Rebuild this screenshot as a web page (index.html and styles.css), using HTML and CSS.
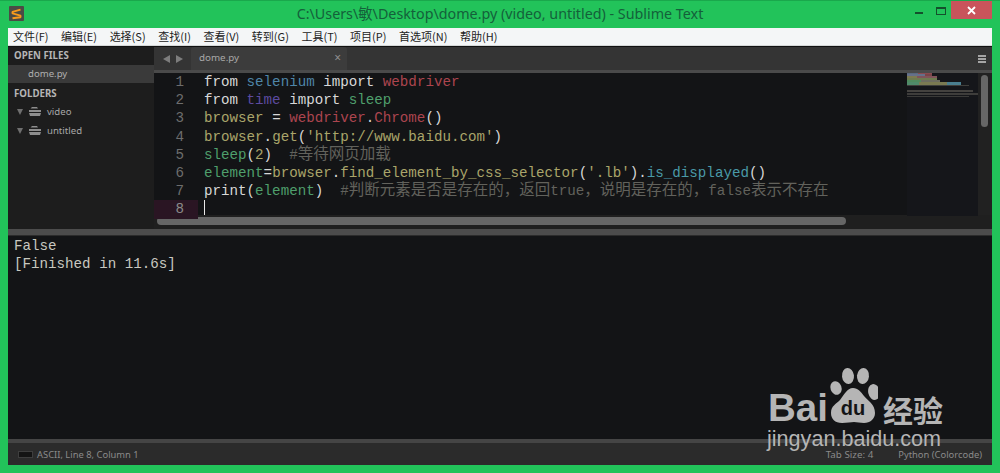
FILE: index.html
```html
<!DOCTYPE html>
<html lang="zh">
<head>
<meta charset="utf-8">
<title>dome.py - Sublime Text</title>
<link rel="stylesheet" href="styles.css">
</head>
<body>
<div class="window">
  <header class="titlebar">
    <svg class="app-icon" width="15" height="15" viewBox="0 0 15 15"><rect width="15" height="15" rx="1" fill="#4b4b45"/><path d="M11.5 3.6 3.5 5.8v1.6l8 2.2v1.6l-8 1" fill="none" stroke="#f99b1c" stroke-width="1.9" stroke-linejoin="bevel"/></svg>
    <div class="title">C:\Users\敏\Desktop\dome.py (video, untitled) - Sublime Text</div>
    <div class="controls">
      <svg class="ctl-min" width="8" height="3" viewBox="0 0 8 3"><rect width="8" height="2" y="1" fill="#14502c"/></svg>
      <svg class="ctl-max" width="10" height="8" viewBox="0 0 10 8"><rect x=".5" y=".5" width="9" height="7" fill="none" stroke="#14502c"/><rect width="10" height="2" fill="#14502c"/></svg>
      <div class="ctl-close"><svg width="9" height="9" viewBox="0 0 9 9"><path d="M1 1l7 7M8 1 1 8" stroke="#fff" stroke-width="1.8"/></svg></div>
    </div>
  </header>
  <nav class="menubar">
    <span>文件(F)</span><span>编辑(E)</span><span>选择(S)</span><span>查找(I)</span><span>查看(V)</span><span>转到(G)</span><span>工具(T)</span><span>项目(P)</span><span>首选项(N)</span><span>帮助(H)</span>
  </nav>
  <div class="app">
    <div class="top">
      <aside class="sidebar">
        <div class="side-head first">OPEN FILES</div>
        <div class="open-file">dome.py</div>
        <div class="side-head second">FOLDERS</div>
        <div class="folder"><i class="arrow"></i><svg width="12" height="9" viewBox="0 0 12 9"><path d="M3 0h5l1 1.5H1.5zM0 3h12v2H0zM0 6h12l-1 3H1z" fill="#8e8e8e"/></svg><span>video</span></div>
        <div class="folder"><i class="arrow"></i><svg width="12" height="9" viewBox="0 0 12 9"><path d="M3 0h5l1 1.5H1.5zM0 3h12v2H0zM0 6h12l-1 3H1z" fill="#8e8e8e"/></svg><span>untitled</span></div>
      </aside>
      <main class="editor-area">
        <div class="tabbar">
          <div class="tab-arrows"><i class="tl"></i><i class="tr"></i></div>
          <div class="tab"><span>dome.py</span><b>×</b></div>
          <div class="burger"><i></i><i></i><i></i></div>
        </div>
        <div class="editor">
          <div class="gutter">
            <div>1</div><div>2</div><div>3</div><div>4</div><div>5</div><div>6</div><div>7</div><div class="cur">8</div>
          </div>
          <pre class="code"><span class="w">from</span> <span class="b">selenium</span> <span class="w">import</span> <span class="r">webdriver</span>
<span class="w">from</span> <span class="p">time</span> <span class="w">import</span> <span class="g">sleep</span>
<span class="y">browser</span> <span class="w">=</span> <span class="r">webdriver</span><span class="w">.</span><span class="r">Chrome</span><span class="w">()</span>
<span class="y">browser</span><span class="w">.</span><span class="y">get</span><span class="w">(</span><span class="y">'http://www.baidu.com'</span><span class="w">)</span>
<span class="g">sleep</span><span class="w">(</span><span class="y">2</span><span class="w">)</span>  <span class="c">#<span class="cjk">等待网页加载</span></span>
<span class="g">element</span><span class="w">=</span><span class="y">browser</span><span class="w">.</span><span class="y">find_element_by_css_selector</span><span class="w">(</span><span class="y">'.lb'</span><span class="w">).</span><span class="t">is_displayed</span><span class="w">()</span>
<span class="w">print(</span><span class="g">element</span><span class="w">)</span>  <span class="c">#<span class="cjk">判断元素是否是存在的，返回</span>true<span class="cjk">，说明是存在的，</span>false<span class="cjk">表示不存在</span></span>
<span class="caret"></span></pre>
          <svg class="minimap" width="71" height="143" viewBox="0 0 71 143">
            <rect x="0" y="0" width="11" height="1" fill="#5a6a80"/><rect x="11" y="0" width="14" height="1" fill="#8a4a50"/><rect x="0" y="1" width="18" height="2" fill="#66708a"/><rect x="18" y="1" width="7" height="2" fill="#7a4448"/><rect x="0" y="3" width="10" height="2" fill="#7d7a50"/><rect x="10" y="3" width="20" height="2" fill="#80545a"/><rect x="0" y="5" width="30" height="2" fill="#6e7a50"/><rect x="0" y="7" width="14" height="2" fill="#4f8a5e"/><rect x="14" y="7" width="19" height="2" fill="#6d6d60"/><rect x="0" y="9" width="12" height="3" fill="#4f8a6a"/><rect x="12" y="9" width="28" height="3" fill="#7a7a52"/><rect x="40" y="9" width="14" height="3" fill="#4a7f90"/><rect x="0" y="12" width="62" height="1" fill="#3f3f3c"/>
            <rect x="0" y="17" width="66" height="2" fill="#44423f"/><rect x="0" y="20" width="71" height="2" fill="#3e3d3b"/><rect x="0" y="23" width="62" height="1" fill="#3a3a38"/>
          </svg>
          <div class="vscroll"><i></i></div>
        </div>
        <div class="hscroll"><i></i></div>
      </main>
    </div>
    <div class="divider"></div>
    <pre class="output">False
[Finished in 11.6s]</pre>
    <footer class="statusbar">
      <i class="panel-ico"></i><span class="st-left">ASCII, Line 8, Column 1</span>
      <span class="st-tab">Tab Size: 4</span><span class="st-syntax">Python (Colorcode)</span>
    </footer>
  </div>
  <div class="watermark">
    <div class="wm-row">
      <span class="wm-bai">Bai</span>
      <div class="wm-paw">
        <svg width="50" height="56" viewBox="0 0 50 56"><ellipse cx="8" cy="21" rx="5.5" ry="7" transform="rotate(-20 8 21)" fill="#b5b5b5"/><ellipse cx="20" cy="9" rx="6" ry="8" transform="rotate(-6 20 9)" fill="#b5b5b5"/><ellipse cx="35" cy="9" rx="6" ry="8" transform="rotate(6 35 9)" fill="#b5b5b5"/><ellipse cx="46" cy="25" rx="5.8" ry="8" transform="rotate(-12 46 25)" fill="#b5b5b5"/><path d="M25 21c5 0 8 4 11 8 4 5 11 8 11 17 0 6-5 10-11 10-4 0-7-1-10-1s-7 1-12 1C7 56 3 52 3 46c0-7 5-9 9-13 4-5 7-12 13-12z" fill="#b5b5b5"/></svg>
        <span class="wm-du">du</span>
      </div>
      <span class="wm-cn">经验</span>
    </div>
    <div class="wm-url">jingyan.baidu.com</div>
  </div>
</div>
</body>
</html>
```
FILE: styles.css
```css
* { box-sizing: border-box; }
html, body { margin: 0; height: 100%; overflow: hidden; }
body { background: #22c35a; font-family: "Noto Sans", "Noto Sans CJK SC", sans-serif; }
.window { position: relative; width: 1000px; height: 473px; padding: 0 8px 8px 8px; display: flex; flex-direction: column; border-top: 1px solid #1aa84c; }
.titlebar { height: 27px; flex: none; display: flex; align-items: flex-start; position: relative; }
.app-icon { margin: 5px 0 0 1px; }
.title { position: absolute; left: -8px; width: 1000px; top: 4px; text-align: center; color: #14603a; font-size: 14.3px; line-height: 18px; white-space: nowrap; }
.controls { margin-left: auto; display: flex; align-items: flex-start; position: relative; width: 78px; margin-right: -1px; }
.ctl-min { position: absolute; left: 0; top: 10px; }
.ctl-max { position: absolute; left: 21px; top: 6px; }
.ctl-close { position: absolute; left: 36px; top: 0; width: 41px; height: 18px; background: #c9545b; display: flex; align-items: center; justify-content: center; }
.menubar { height: 18px; flex: none; background: #f4f6f7; border-bottom: 1px solid #d5d8d8; display: flex; gap: 12.6px; padding-left: 5px; font-size: 11px; line-height: 17px; color: #222; font-family: "Noto Sans CJK SC", sans-serif; white-space: nowrap; }
.app { flex: 1; min-height: 0; display: flex; flex-direction: column; background: #131416; border-top: 1px solid #111; }
.top { height: 182px; flex: none; display: flex; }
.sidebar { width: 146px; flex: none; background: #1d1d1d; color: #a8a8a8; font-size: 9.6px; }
.side-head { font-weight: 700; color: #b5b5b5; padding-left: 6px; height: 18px; line-height: 18px; font-size: 9.7px; }
.side-head.second { margin-top: 1px; line-height: 20px; }
.open-file { height: 18px; line-height: 18px; background: #3a3a3a; padding-left: 20px; color: #b0b0b0; margin-bottom: 1px; }
.folder { height: 19px; display: flex; align-items: center; gap: 6px; padding-left: 9px; }
.arrow { width: 0; height: 0; border: 3.5px solid transparent; border-top: 6px solid #6f6f6f; border-bottom: 0; }
.editor-area { flex: 1; min-width: 0; display: flex; flex-direction: column; background: #131416; }
.tabbar { height: 26px; flex: none; background: #343434; border-bottom: 3px solid #4a4a4a; display: flex; position: relative; }
.tab-arrows { width: 37px; display: flex; align-items: center; justify-content: center; gap: 6px; padding-top: 1px; }
.tab-arrows i { width: 0; height: 0; border: 4px solid transparent; }
.tab-arrows .tl { border-right: 7px solid #7d7d7d; border-left: 0; }
.tab-arrows .tr { border-left: 7px solid #7d7d7d; border-right: 0; }
.tab { width: 156px; background: #3c3c3c; border-radius: 3px 3px 0 0; color: #a8a8a8; font-size: 9.8px; line-height: 22px; padding-left: 8px; position: relative; }
.tab b { position: absolute; right: 6px; top: 0; font-weight: 400; font-size: 12px; color: #8f8f8f; }
.burger { position: absolute; right: 6px; top: 8px; display: flex; flex-direction: column; gap: 1.5px; }
.burger i { display: block; width: 8px; height: 1.5px; background: #a5a5a5; }
.editor { flex: 1; min-height: 0; display: flex; position: relative; }
.gutter { width: 49px; flex: none; font: 14.2px/18.2px "Liberation Mono", monospace; color: #6d6d6d; text-align: right; }
.gutter div { padding-right: 19px; height: 18.2px; }
.gutter .cur { background: #2a1523; color: #8a8a8a; width: 44px; padding-right: 14px; }
.code { flex: 1; min-width: 0; margin: 0; padding: 0 0 0 1px; font: 14.2px/18.2px "Liberation Mono", monospace; color: #d6d6d6; overflow: hidden; }
.w { color: #d8d8d8; }
.b { color: #4f86a8; }
.p { color: #5d4ba0; }
.r { color: #ac454f; }
.g { color: #4f9f6c; }
.y { color: #aaa56a; }
.t { color: #4a9aa8; }
.c { color: #62625c; }
.cjk { font-family: "Noto Sans CJK SC", sans-serif; font-size: 15.5px; line-height: 0; }
.caret { display: inline-block; width: 1px; height: 17px; background: #e8e8e8; vertical-align: top; }
.minimap { flex: none; background: #15161a; }
.vscroll { width: 14px; flex: none; background: #212121; padding: 2px 2px 0 3px; }
.vscroll i { display: block; width: 7px; height: 52px; border-radius: 4px; background: #666; }
.hscroll { height: 14px; flex: none; background: #1f1f1f; padding: 2px 0 0 3px; }
.hscroll i { display: block; width: 689px; height: 8px; border-radius: 4px; background: #666; }
.divider { height: 7px; flex: none; background: #4c4c4c; border-bottom: 1px solid #2c2c2c; }
.output { flex: 1; min-height: 0; margin: 0; padding: 1px 0 0 6px; font: 14.2px/18.2px "Liberation Mono", monospace; color: #c8c8c0; background: #131416; }
.statusbar { height: 26px; flex: none; background: #2b2b2b; border-top: 4px solid #454545; display: flex; align-items: center; font-size: 9.4px; color: #8a8a8a; padding-left: 10px; }
.panel-ico { display: block; width: 15px; height: 7px; background: #141414; border: 1px solid #3e3e3e; margin-right: 4px; }
.st-tab { margin-left: auto; font-size: 9.8px; }
.st-syntax { margin-left: 25px; margin-right: 10px; }
.watermark { position: absolute; left: 768px; top: 366px; color: #b5b5b5; width: 190px; }
.wm-row { display: flex; align-items: flex-end; height: 56px; }
.wm-bai { font: 700 38.5px/36px "Liberation Sans", sans-serif; margin-bottom: -3px; }
.wm-paw { position: relative; width: 50px; height: 56px; flex: none; }
.wm-du { position: absolute; left: 10px; top: 31px; width: 30px; text-align: center; font: 700 20px/20px "Liberation Sans", sans-serif; color: #131416; }
.wm-cn { font: 700 30px/32px "Noto Sans CJK SC", sans-serif; margin-left: 5px; margin-bottom: -2px; white-space: nowrap; }
.wm-url { font: 400 21.6px/19px "Liberation Sans", sans-serif; margin-left: -1px; margin-top: 6px; white-space: nowrap; }
```
